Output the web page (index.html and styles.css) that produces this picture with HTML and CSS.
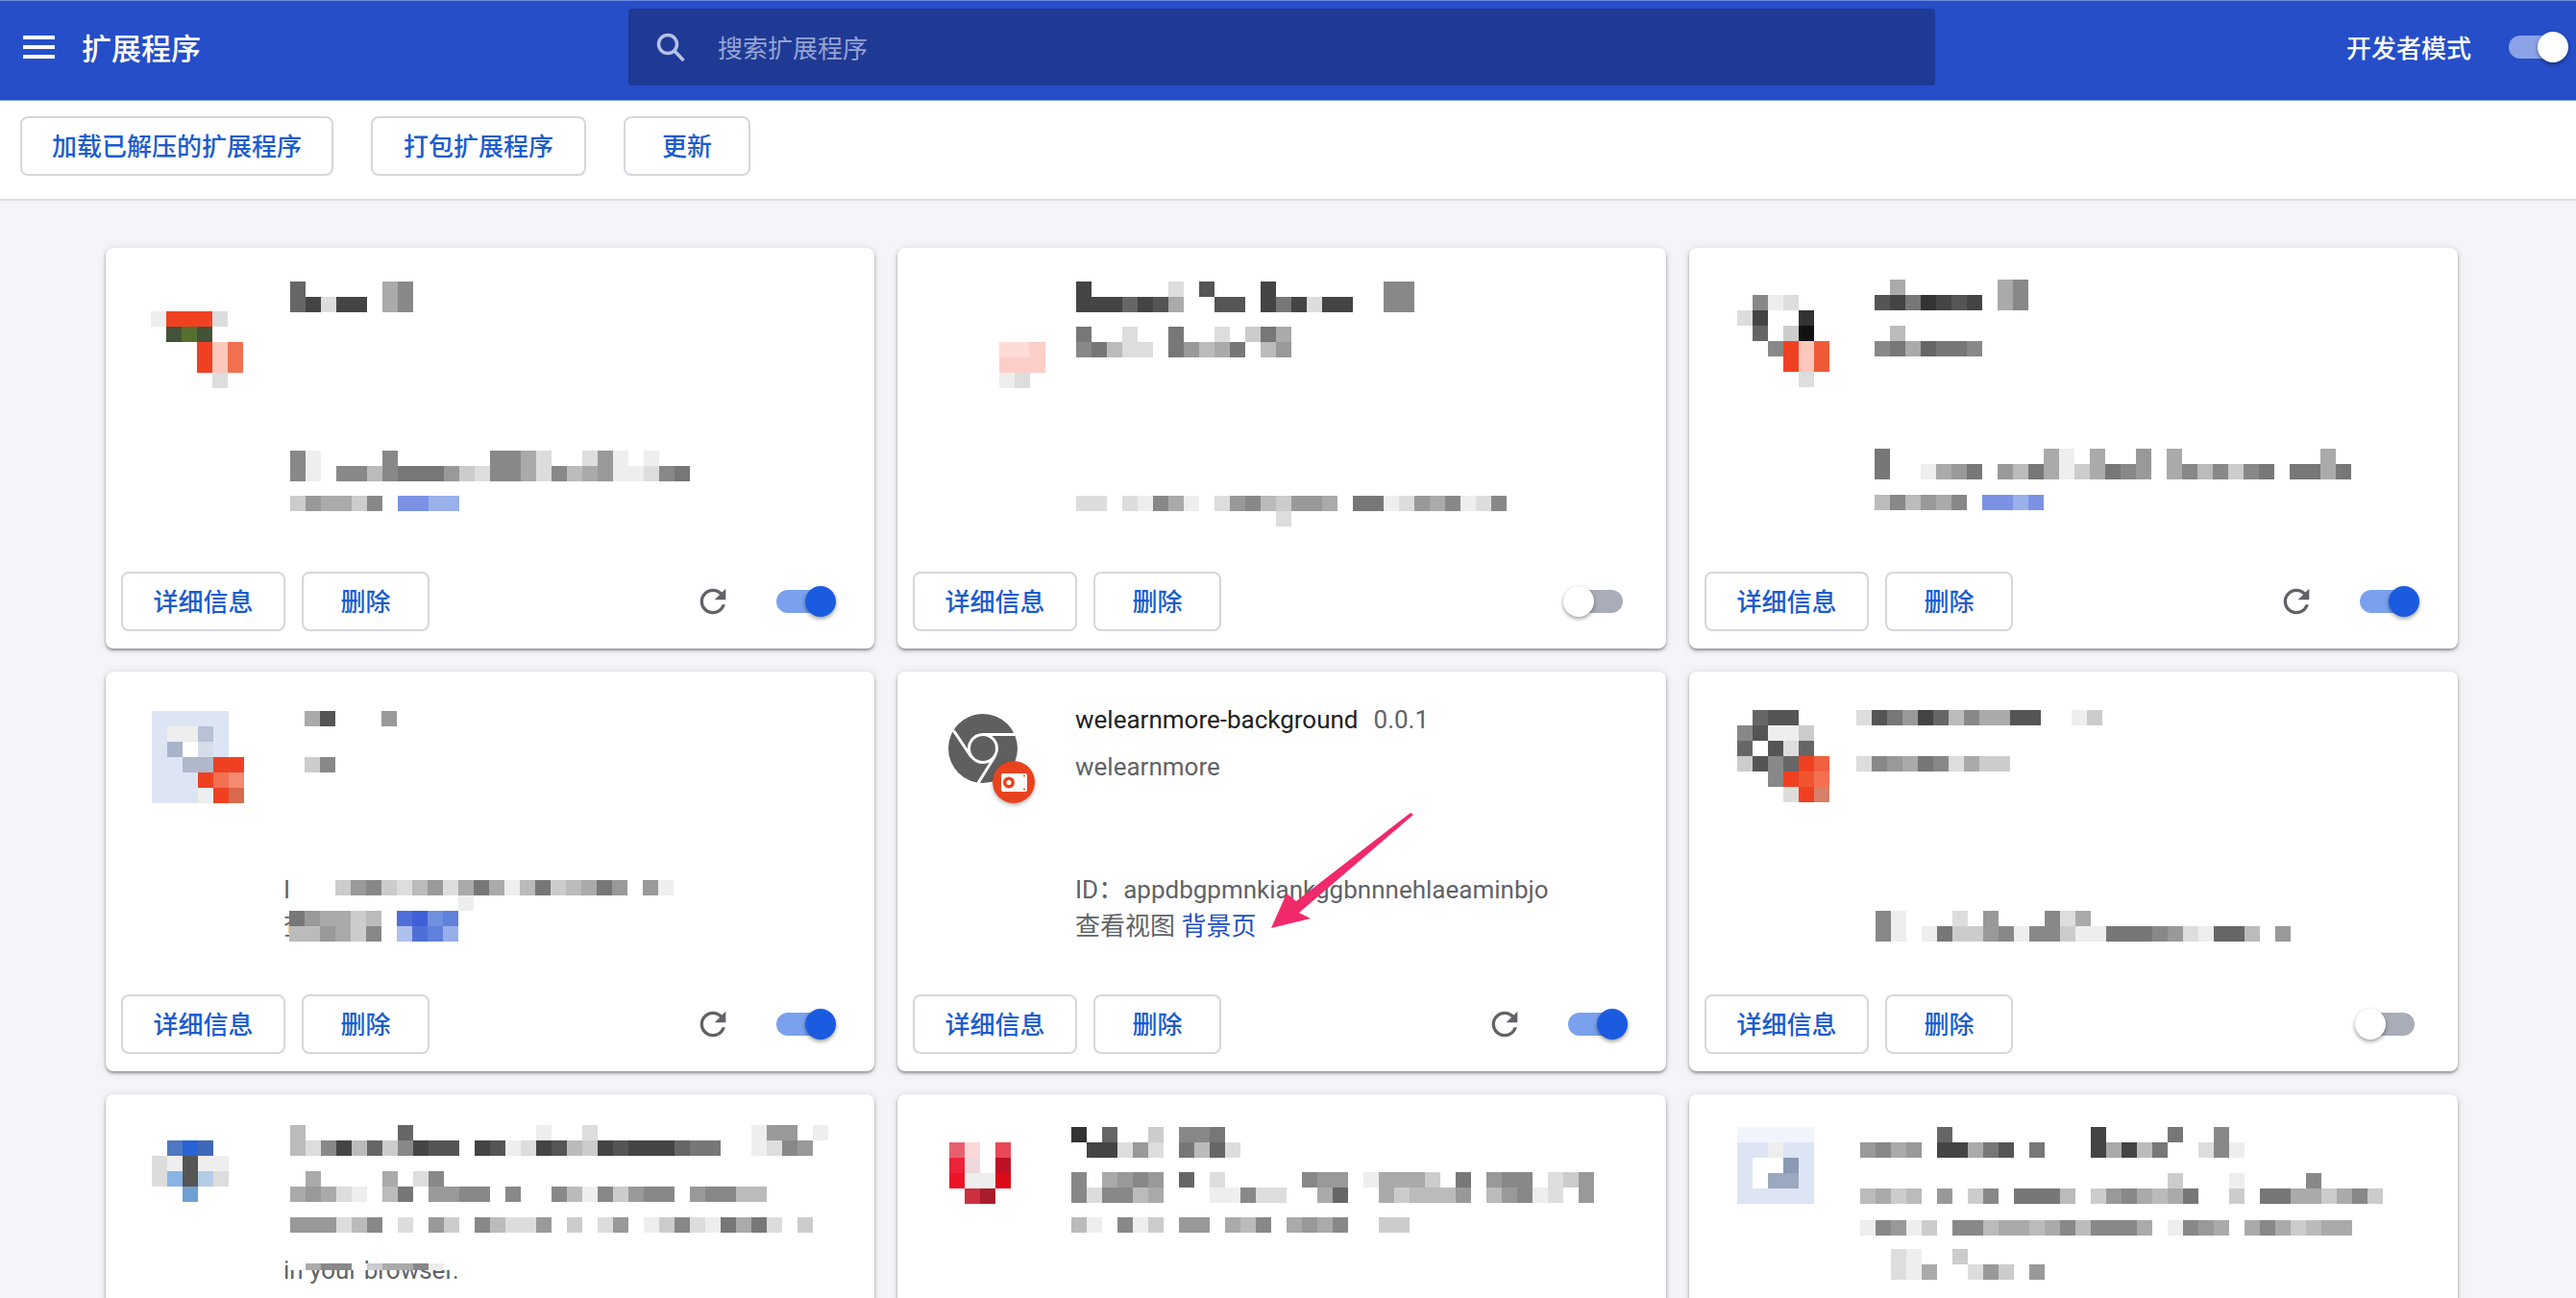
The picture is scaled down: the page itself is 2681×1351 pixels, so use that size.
FILE: index.html
```html
<!DOCTYPE html>
<html lang="zh-CN">
<head>
    <meta charset="UTF-8">
    <title>扩展程序</title>
    <link rel="stylesheet" href="styles.css">
</head>
<body>
    <header class="topbar">
        <div class="topbar-left">
            <svg class="menu-icon" viewBox="0 0 33 24"><path d="M0 0h33v4H0zM0 10h33v4H0zM0 20h33v4H0z"/></svg>
            <h1 class="topbar-title">扩展程序</h1>
        </div>
        <div class="search-box">
            <svg class="search-icon" viewBox="0 0 30 30"><circle cx="12" cy="12" r="9.5"/><path d="M19 19l9.5 10"/></svg>
            <span class="search-text">搜索扩展程序</span>
        </div>
        <div class="topbar-right">
            <span class="dev-label">开发者模式</span>
            <span class="toggle toggle-header"><i></i></span>
        </div>
    </header>

    <div class="toolbar">
        <button class="btn btn-load">加载已解压的扩展程序</button>
        <button class="btn btn-pack">打包扩展程序</button>
        <button class="btn btn-update">更新</button>
    </div>

    <main class="cards">
        <article class="card">
            <div class="card-main"></div>
            <div class="card-actions">
                <button class="btn btn-detail">详细信息</button>
                <button class="btn btn-remove">删除</button>
                <svg class="reload-icon" viewBox="0 0 24 24"><path d="M17.65 6.35A7.958 7.958 0 0012 4c-4.42 0-7.99 3.58-7.99 8s3.57 8 7.99 8c3.73 0 6.84-2.55 7.73-6h-2.08A5.99 5.99 0 0112 18c-3.31 0-6-2.69-6-6s2.69-6 6-6c1.66 0 3.14.69 4.22 1.78L13 11h7V4l-2.35 2.35z"/></svg>
                <span class="toggle toggle-on"><i></i></span>
            </div>
        </article>
        <article class="card">
            <div class="card-main"></div>
            <div class="card-actions">
                <button class="btn btn-detail">详细信息</button>
                <button class="btn btn-remove">删除</button>
                <span class="toggle toggle-off"><i></i></span>
            </div>
        </article>
        <article class="card">
            <div class="card-main"></div>
            <div class="card-actions">
                <button class="btn btn-detail">详细信息</button>
                <button class="btn btn-remove">删除</button>
                <svg class="reload-icon" viewBox="0 0 24 24"><path d="M17.65 6.35A7.958 7.958 0 0012 4c-4.42 0-7.99 3.58-7.99 8s3.57 8 7.99 8c3.73 0 6.84-2.55 7.73-6h-2.08A5.99 5.99 0 0112 18c-3.31 0-6-2.69-6-6s2.69-6 6-6c1.66 0 3.14.69 4.22 1.78L13 11h7V4l-2.35 2.35z"/></svg>
                <span class="toggle toggle-on"><i></i></span>
            </div>
        </article>

        <article class="card">
            <div class="card-main">
                <div class="card-icon"></div>
                <div class="card-text">
                    <div class="card-id card-id-top">ID：</div>
                    <div class="card-views">查</div>
                </div>
            </div>
            <div class="card-actions">
                <button class="btn btn-detail">详细信息</button>
                <button class="btn btn-remove">删除</button>
                <svg class="reload-icon" viewBox="0 0 24 24"><path d="M17.65 6.35A7.958 7.958 0 0012 4c-4.42 0-7.99 3.58-7.99 8s3.57 8 7.99 8c3.73 0 6.84-2.55 7.73-6h-2.08A5.99 5.99 0 0112 18c-3.31 0-6-2.69-6-6s2.69-6 6-6c1.66 0 3.14.69 4.22 1.78L13 11h7V4l-2.35 2.35z"/></svg>
                <span class="toggle toggle-on"><i></i></span>
            </div>
        </article>
        <article class="card">
            <div class="card-main">
                <div class="card-icon">
                    <svg class="ext-icon" viewBox="0 0 92 92">
                        <circle cx="36" cy="36" r="36" fill="#5f5f5f"/>
                        <circle cx="36" cy="36" r="14.5" fill="none" stroke="#fff" stroke-width="3"/>
                        <path d="M36 21.5h34M5.5 17.500L24 45M48.500 44L31 72" fill="none" stroke="#fff" stroke-width="3"/>
                        <circle class="ext-badge" cx="68" cy="71" r="22" fill="#e8431f"/>
                        <rect x="55" y="62" width="27" height="19" rx="2" fill="#fff"/>
                        <circle cx="63" cy="71.500" r="6" fill="#e8431f"/>
                        <circle cx="63" cy="71.500" r="2.500" fill="#fff"/>
                        <circle cx="79" cy="64.500" r="1" fill="#e8431f"/>
                        <circle cx="79" cy="78.500" r="1" fill="#e8431f"/>
                    </svg>
                </div>
                <div class="card-text">
                    <div class="card-title"><span class="card-name">welearnmore-background</span><span class="card-version">0.0.1</span></div>
                    <div class="card-desc">welearnmore</div>
                    <div class="card-id">ID：appdbgpmnkiankggbnnnehlaeaminbjo</div>
                    <div class="card-views">查看视图 <a class="card-link">背景页</a></div>
                </div>
            </div>
            <div class="card-actions">
                <button class="btn btn-detail">详细信息</button>
                <button class="btn btn-remove">删除</button>
                <svg class="reload-icon" viewBox="0 0 24 24"><path d="M17.65 6.35A7.958 7.958 0 0012 4c-4.42 0-7.99 3.58-7.99 8s3.57 8 7.99 8c3.73 0 6.84-2.55 7.73-6h-2.08A5.99 5.99 0 0112 18c-3.31 0-6-2.69-6-6s2.69-6 6-6c1.66 0 3.14.69 4.22 1.78L13 11h7V4l-2.35 2.35z"/></svg>
                <span class="toggle toggle-on"><i></i></span>
            </div>
        </article>
        <article class="card">
            <div class="card-main"></div>
            <div class="card-actions">
                <button class="btn btn-detail">详细信息</button>
                <button class="btn btn-remove">删除</button>
                <span class="toggle toggle-off"><i></i></span>
            </div>
        </article>

        <article class="card">
            <div class="card-main">
                <div class="card-icon"></div>
                <div class="card-text">
                    <div class="card-tail">in your browser.</div>
                </div>
            </div>
        </article>
        <article class="card"></article>
        <article class="card"></article>
    </main>

    <!-- annotation layer: mosaic patches (script.js) and the pink arrow -->
    <svg class="annotations" width="2681" height="1351" viewBox="0 0 2681 1351">
        <g id="patches" shape-rendering="crispEdges"></g>
        <polygon class="arrow" points="1471,848 1352,950 1364,956 1323,966 1339,930 1349,938 1468,846"/>
    </svg>

    <script src="script.js"></script>
</body>
</html>
```

FILE: styles.css
```css
* {
    box-sizing: border-box;
}
body {
    margin: 0;
    height: 100vh;
    overflow: hidden;
    position: relative;
    background-color: #f4f5f9;
    font-family: Roboto, "Noto Sans CJK SC", sans-serif;
}

/* top bar */
.topbar {
    display: flex;
    align-items: center;
    height: 105px;
    padding-bottom: 8px;
    background-color: #254ec8;
    border-top: 1px solid #6d8ce0;
    border-bottom: 1px solid #8ea5e6;
    color: #fff;
}
.topbar-left {
    display: flex;
    align-items: center;
    width: 654px;
    padding-left: 24px;
}
.menu-icon {
    width: 33px;
    height: 24px;
    fill: #fff;
}
.topbar-title {
    margin: 0 0 0 28px;
    font-size: 31px;
    font-weight: 500;
}
.search-box {
    display: flex;
    align-items: center;
    width: 1360px;
    height: 80px;
    padding-left: 29px;
    background-color: #1f3a94;
    border-radius: 4px;
}
.search-icon {
    width: 30px;
    height: 30px;
    fill: none;
    stroke: #b4c2e6;
    stroke-width: 3.5;
}
.search-text {
    margin-left: 34px;
    font-size: 26px;
    color: #94a4d4;
}
.topbar-right {
    display: flex;
    align-items: center;
    margin-left: auto;
    padding-right: 13px;
}
.dev-label {
    font-size: 26px;
    font-weight: 500;
    margin-right: 39px;
}

/* toggles */
.toggle {
    position: relative;
    display: block;
    width: 57px;
    height: 24px;
    border-radius: 12px;
}
.toggle i {
    position: absolute;
    top: -4px;
    width: 32px;
    height: 32px;
    border-radius: 50%;
    box-shadow: 0 2px 4px rgba(0, 0, 0, 0.4);
}
.toggle-on {
    background-color: #7aa1ee;
    margin-left: 46px;
}
.toggle-on i {
    right: -5px;
    background-color: #1a5be0;
}
.toggle-off {
    background-color: #a8adb8;
    margin-left: auto;
}
.toggle-off i {
    left: -5px;
    background-color: #fff;
}
.toggle-header {
    background-color: #8ba3e6;
}
.toggle-header i {
    right: -5px;
    background-color: #fff;
}

/* buttons */
.btn {
    height: 62px;
    padding: 0 0 3px;
    background-color: #fff;
    border: 2px solid #d5d7db;
    border-radius: 8px;
    color: #1a5ccf;
    font-family: inherit;
    font-size: 26px;
    font-weight: 500;
}
.btn-load {
    width: 326px;
}
.btn-pack {
    width: 224px;
}
.btn-update {
    width: 132px;
}
.btn-detail {
    width: 171px;
}
.btn-remove {
    width: 133px;
}

.toolbar {
    display: flex;
    align-items: center;
    gap: 39px;
    height: 104px;
    padding: 0 0 8px 21px;
    background-color: #fff;
    border-bottom: 2px solid #dcdde2;
}

/* cards */
.cards {
    display: grid;
    grid-template-columns: repeat(3, 800px);
    grid-auto-rows: 416.5px;
    gap: 24px;
    padding: 49px 0 0 110px;
}
.card {
    display: flex;
    flex-direction: column;
    background-color: #fff;
    border-radius: 8px;
    box-shadow: 0 2px 3px rgba(60, 64, 67, 0.5), 0 1px 8px rgba(60, 64, 67, 0.15);
}
.card-main {
    display: flex;
    flex-grow: 1;
    padding: 31px 0 0 53px;
    color: #5f6368;
    font-size: 26px;
    line-height: 38px;
}
.card-icon {
    width: 132px;
    flex-shrink: 0;
    padding-top: 13px;
}
.ext-icon {
    display: block;
    width: 92px;
    height: 92px;
    overflow: visible;
}
.ext-badge {
    filter: drop-shadow(0 2px 2px rgba(0, 0, 0, 0.3));
}
.card-name {
    color: #202124;
}
.card-version {
    margin-left: 16px;
}
.card-desc {
    margin-top: 11px;
}
.card-id {
    margin-top: 90px;
}
.card-id-top {
    margin-top: 177px;
}
.card-link {
    color: #1f4fc4;
}
.card-tail {
    margin-top: 133px;
}
.card-actions {
    display: flex;
    align-items: center;
    gap: 17px;
    padding: 0 45px 18px 16px;
}
.reload-icon {
    width: 40px;
    height: 40px;
    margin-left: auto;
    margin-right: -17px;
    fill: #5f6368;
}

/* annotation layer over the page */
.annotations {
    position: absolute;
    top: 0;
    left: 0;
    pointer-events: none;
}
.arrow {
    fill: #f02a6b;
}
```

FILE: script.js
```js
// Named colours for the coloured mosaic cells. Hex digits are grey levels, "." is see-through.
const palette = {
    R: '#ef4122', G: '#45523a', H: '#567030', P: '#fcc8bc', O: '#f07050',
    A: '#7b92e4', B: '#9ab0ea', S: '#fddcd5', T: '#fbcfc7', L: '#dde5f5',
    C: '#b8c2d6', D: '#a8b4cc', E: '#d5dcea', F: '#b0b8cc', I: '#f58a70',
    J: '#d8694c', K: '#4f6fd8', M: '#4060d8', N: '#7090e0', Q: '#5f80dc',
    U: '#b0c0ee', V: '#98aeea', W: '#5078c0', X: '#2a62d8', Y: '#4068b8',
    Z: '#8ab4e4', g: '#b4cce8', h: '#6f9fd4', i: '#e86070', j: '#fcd8d8',
    k: '#e84858', l: '#ee2238', m: '#eed8dc', n: '#c01028', o: '#ee1428',
    p: '#dd0818', q: '#cc3040', r: '#a81c2c', s: '#8a9ab5', t: '#9aa8c0',
    u: '#f1f4fb', v: '#f06040', w: '#f05530', x: '#f57050', y: '#d88068',
    z: '#ee5a38'
};

// [left, top, rows, cell height]; cells are 16px wide
const patches = [
    // row 1
    [157, 324, ['eRRRd', '.GHG', '...RPO', '...RPO', '....df']],
    [302, 293, ['6.....a8f', '64d44.a8f']],
    [302, 469, ['8e...f8......88ad..d9e.e..f', '8e.88b87779cd88ad8ba9eed87f']],
    [302, 516, ['c9aac8.AABB']],

    [1040, 356, ['SST', 'TTT', 'ed']],
    [1120, 293, ['4.....df5...4.......88', '444645af.55f474d44f.88']],
    [1120, 340, ['7..d..7..d.c7a', '87bdd.79ba7fb9']],
    [1120, 516, ['dd.de8aefd98bc99af77ed9a8ed8', '.....f.......d..........f']],

    [1808, 307, ['.8ed', 'd4..3', '.6.c1', '.f8RPz', '...RPz', '....df']],
    [1935, 291, ['..a......a8f', 'f5473454.a8f']],
    [1935, 339, ['..b', 'f87a6778']],
    [1935, 467, ['f7f.........ae.a..9.a.........a', 'f7f.ea97.9b7aeca789fa8b8c87f77a7']],
    [1935, 515, ['fb8b9a8.AABA']],

    // row 2
    [158, 740, ['LLLLL', 'LeeCL', 'LDfEL', 'LLFFRR', 'LLLROI', 'LLLeRJ']],
    [301, 740, ['fa5...9f']],
    [301, 788, ['fc8']],
    [301, 916, ['fffc98cdb9da7aeb7cba79f9ef', 'fff........e.f']],
    [301, 948, ['79aacb.KMNQ', 'bb9ac8.UKQV']],

    [1808, 739, ['.655', '85eec', '6f5d6', 'c586Rv', '.f8Rwx', '...dRy']],
    [1932, 739, ['d57946b8aa55ffec']],
    [1932, 787, ['d89a78dacc']],
    [1936, 948, ['f8e...d.9...8da', 'f8e.e7cc98e88cee77789de66bf9']],

    // row 3
    [158, 1187, ['.WXY', 'de5ee', 'dZ5gd', '.fhf']],
    [302, 1171, ['bf.....6........e..d..........e99.e', 'bd84b6c8455.45ed45bc45444677..ed89f']],
    [302, 1219, ['fa....a.d8......f', 'a9ade.b7.9988.8.f8be8c988.988bb']],
    [302, 1267, ['999db8.d.9c.8bdd9.c.d9.ec8de7a7dfc']],
    [302, 1315, ['fa88fcaa8ef'], 7],

    [988, 1173, ['.ff', 'ijfk', 'lmfn', 'oeep', '.qrf']],
    [1115, 1173, ['3.6..c.887', '.44d9d.7b6d']],
    [1115, 1220, ['8.a989f6.d.....899.eaaacf7.988fdc9', '8d88baff.ee8dd.fa6.facbbb9.b98edf9']],
    [1115, 1267, ['be.8ec.99fab8.a9a8..cc']],

    [1808, 1173, ['uuuuu', 'LLeLL', 'LffsL', 'LfttL', 'LLLLL']],
    [1936, 1173, ['.....6......f..4....7..8', '98a9.44a75.7f.f4a4b7..d8e']],
    [1936, 1221, ['...............f....c...e....8', 'bacbf9.c8.777bfc98aba7f.c.77aaca8c']],
    [1936, 1270, ['e89ec.88baaba8b888afe89afa8acbaa']],
    [1936, 1300, ['.fde.fc...f', '.fdea.fd9cf9']]
];

function cellColor(ch) {
    if (palette[ch]) return palette[ch];
    const grey = parseInt(ch, 16) * 17;
    return `rgb(${grey},${grey},${grey})`;
}

const layer = document.getElementById('patches');
patches.forEach(([left, top, rows, cellHeight = 16]) => {
    rows.forEach((row, r) => {
        [...row].forEach((ch, c) => {
            if (ch === '.') return;
            const rect = document.createElementNS('http://www.w3.org/2000/svg', 'rect');
            rect.setAttribute('x', left + c * 16);
            rect.setAttribute('y', top + r * 16);
            rect.setAttribute('width', 16);
            rect.setAttribute('height', cellHeight);
            rect.setAttribute('fill', cellColor(ch));
            layer.appendChild(rect);
        });
    });
});
```
